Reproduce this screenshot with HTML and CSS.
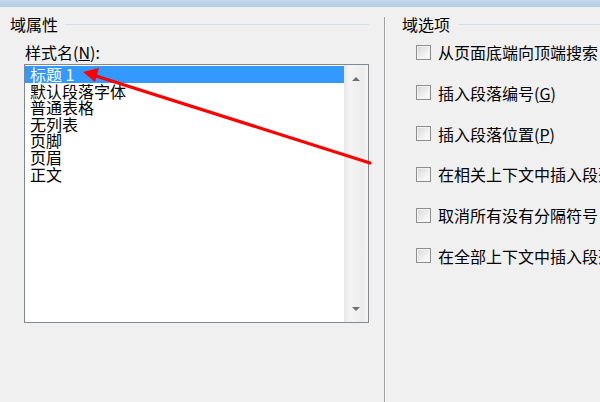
FILE: index.html
```html
<!DOCTYPE html>
<html lang="zh-CN">
<head>
    <meta charset="UTF-8">
    <title>域</title>
    <link rel="stylesheet" href="styles.css">
</head>
<body>
    <div class="titlebar"></div>
    <div class="dialog">
        <section class="pane pane-left">
            <div class="group-title">
                <span>域属性</span>
                <i class="rule"></i>
            </div>
            <div class="field-label">样式名(<u>N</u>):</div>
            <div class="listbox">
                <ul class="list">
                    <li class="selected">标题 1</li>
                    <li>默认段落字体</li>
                    <li>普通表格</li>
                    <li>无列表</li>
                    <li>页脚</li>
                    <li>页眉</li>
                    <li>正文</li>
                </ul>
                <div class="scrollbar">
                    <span class="arrow arrow-up"></span>
                    <span class="arrow arrow-down"></span>
                </div>
            </div>
        </section>
        <div class="divider"></div>
        <section class="pane pane-right">
            <div class="group-title">
                <span>域选项</span>
                <i class="rule"></i>
            </div>
            <ul class="options">
                <li><span class="checkbox"></span>从页面底端向顶端搜索</li>
                <li><span class="checkbox"></span>插入段落编号(<u>G</u>)</li>
                <li><span class="checkbox"></span>插入段落位置(<u>P</u>)</li>
                <li><span class="checkbox"></span>在相关上下文中插入段落编号</li>
                <li><span class="checkbox"></span>取消所有没有分隔符号</li>
                <li><span class="checkbox"></span>在全部上下文中插入段落编号</li>
            </ul>
        </section>
    </div>

    <!-- 红色标注箭头 -->
    <svg class="annotation" width="600" height="402" viewBox="0 0 600 402">
        <line x1="370" y1="163" x2="96" y2="76" stroke="#ff0000" stroke-width="3.2" stroke-linecap="round"/>
        <polygon points="83,72 99,68 95,82" fill="#ff0000"/>
    </svg>
</body>
</html>
```

FILE: styles.css
```css
/* 对话框基础样式 */
body {
    margin: 0;
    background-color: #f0f0f0;
    color: #000;
    font-family: "Noto Sans CJK SC", sans-serif;
    font-size: 16px;
    position: relative;
    width: 600px;
    height: 402px;
    overflow: hidden;
}
ul {
    list-style: none;
    margin: 0;
    padding: 0;
}
.titlebar {
    height: 7px;
    background: linear-gradient(#c4d8ee, #b6cde6);
}
.dialog {
    display: flex;
    height: 395px;
}
.pane {
    padding-top: 8px;
}
.pane-left {
    width: 384px;
    box-sizing: border-box;
    padding-left: 10px;
    padding-right: 15px;
}
.pane-right {
    flex: 1;
    padding-left: 17px;
    overflow: hidden;
}
.divider {
    width: 1px;
    margin-top: 10px;
    background-color: #a0a0a0;
    box-shadow: 1px 0 0 #fafafa;
}
.group-title {
    display: flex;
    align-items: center;
    line-height: 18px;
    white-space: nowrap;
}
.rule {
    flex: 1;
    height: 1px;
    margin-left: 7px;
    background-color: #d5dfe5;
}
.pane-right .rule {
    margin-left: 8px;
}
.field-label {
    margin: 10px 0 0 15px;
    line-height: 18px;
}
.listbox {
    display: flex;
    width: 345px;
    height: 259px;
    box-sizing: border-box;
    margin: 3px 0 0 14px;
    border: 1px solid #828790;
    background-color: #fff;
}
.list {
    flex: 1;
    padding-top: 1px;
}
.list li {
    height: 16.6px;
    line-height: 16.6px;
    padding-left: 5px;
    white-space: pre;
}
.list li.selected {
    background-color: #3399ff;
    color: #fff;
}
.scrollbar {
    width: 24px;
    position: relative;
    background: linear-gradient(to right, #e6e6e6, #f4f4f4 22%, #ededed 80%, #f6f6f6);
}
.arrow {
    position: absolute;
    left: 8px;
    width: 0;
    height: 0;
    border-left: 4px solid transparent;
    border-right: 4px solid transparent;
}
.arrow-up {
    top: 12px;
    border-bottom: 4px solid #707070;
}
.arrow-down {
    bottom: 11px;
    border-top: 4px solid #707070;
}
.options {
    margin: 10px 0 0 14px;
    display: flex;
    flex-direction: column;
    gap: 22.8px;
}
.options li {
    display: flex;
    align-items: center;
    height: 18px;
    line-height: 18px;
    white-space: nowrap;
}
.checkbox {
    width: 13px;
    height: 13px;
    margin-right: 7px;
    flex: none;
    border: 1px solid #8f8f8f;
    background: linear-gradient(135deg, #d6d6d6, #f6f6f6 70%, #ffffff);
    box-shadow: inset 0 0 0 1px #f2f2f2;
}
.annotation {
    position: absolute;
    top: 0;
    left: 0;
    pointer-events: none;
}
```
